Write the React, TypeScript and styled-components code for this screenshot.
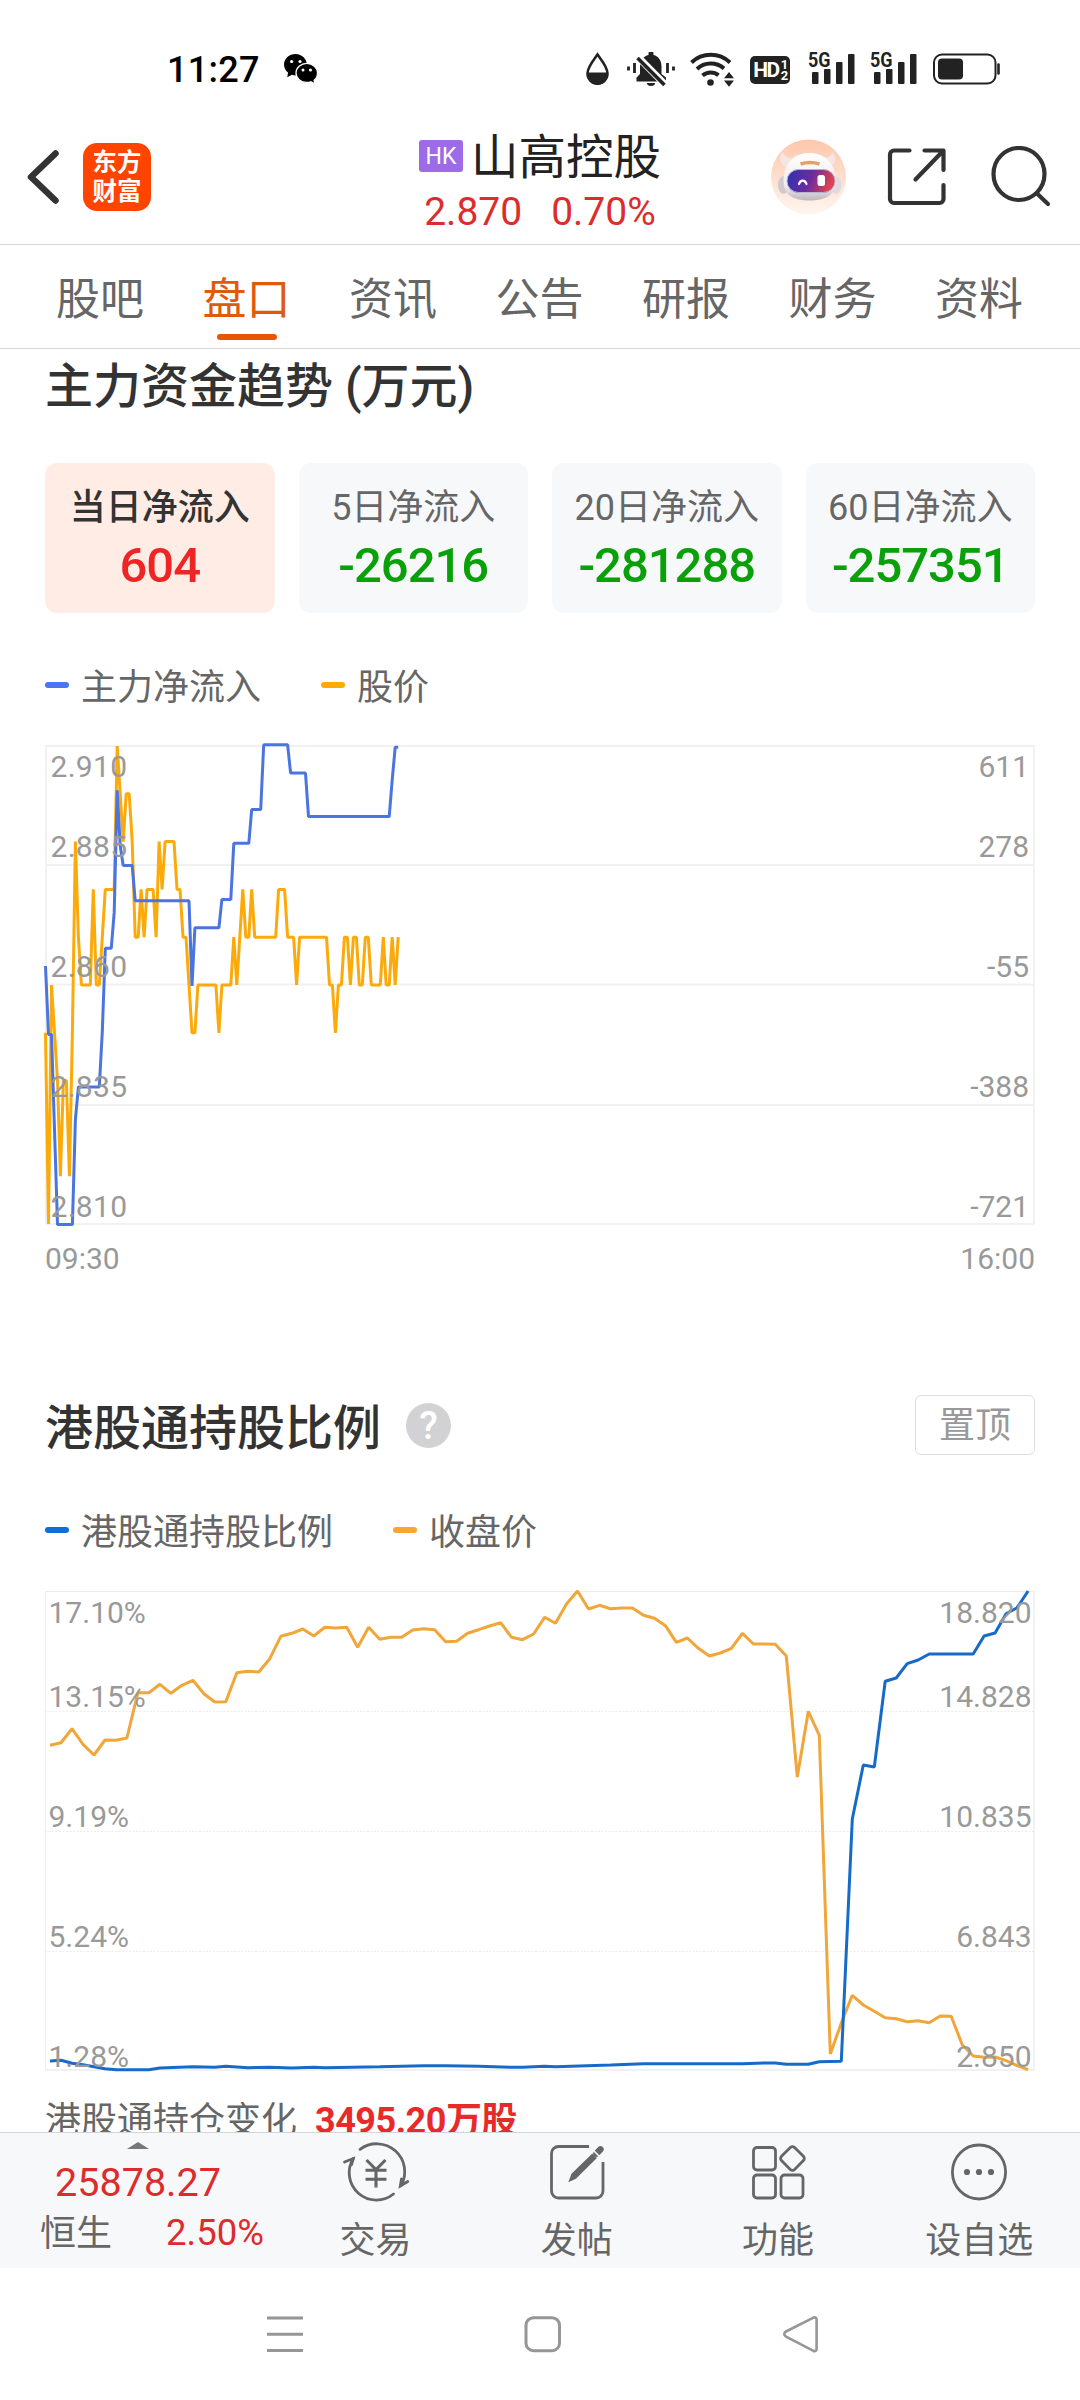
import React from 'react';
import styled, { createGlobalStyle } from 'styled-components';

const GlobalStyle = createGlobalStyle`
  *, *::before, *::after { box-sizing: border-box; }
  body {
    margin: 0;
    background: #ffffff;
    font-family: Roboto, "Noto Sans CJK SC", sans-serif;
    color: #333333;
  }
`;

const Screen = styled.div`
  width: 1080px;
  height: 2400px;
  display: flex;
  flex-direction: column;
  overflow: hidden;
  background: #ffffff;
`;

/* ---------- status bar ---------- */

const StatusBar = styled.div`
  height: 110px;
  flex: none;
  display: flex;
  justify-content: space-between;
  padding: 49px 79px 0 167px;
`;

const StatusGroup = styled.div<{ $gap: number }>`
  display: flex;
  align-items: center;
  gap: ${(p) => p.$gap}px;
  height: 40px;
`;

const Clock = styled.span`
  font-size: 36px;
  font-weight: 500;
  line-height: 40px;
  letter-spacing: 0.3px;
  padding-top: 1px;
  color: #000000;
`;

/* ---------- header ---------- */

const Header = styled.header`
  height: 135px;
  flex: none;
  display: grid;
  grid-template-columns: 1fr auto 1fr;
  border-bottom: 1px solid #d6d6d6;
`;

const HeaderLeft = styled.div`
  display: flex;
  align-items: center;
  gap: 23px;
  padding-left: 25px;
`;

const Logo = styled.div`
  width: 68px;
  height: 68px;
  border-radius: 14px;
  background: #ff4400;
  color: #ffffff;
  display: flex;
  flex-direction: column;
  align-items: center;
  justify-content: center;
  font-size: 24.5px;
  font-weight: 700;
  line-height: 29px;
`;

const StockInfo = styled.div`
  display: flex;
  flex-direction: column;
  align-items: center;
  padding-top: 21px;
  width: 242px;
`;

const StockName = styled.div`
  display: flex;
  align-items: center;
  gap: 8px;
  height: 50px;
  font-size: 47.5px;
  line-height: 50px;
  white-space: nowrap;
  color: #222222;
`;

const StockTitle = styled.span`
  padding-top: 4px;
`;

const MarketTag = styled.span`
  width: 44px;
  height: 32px;
  border-radius: 3px;
  background: #9d6ae8;
  color: #ffffff;
  font-size: 23px;
  line-height: 33px;
  text-align: center;
`;

const Quote = styled.div`
  display: flex;
  gap: 29px;
  margin-top: 6px;
  font-size: 39px;
  line-height: 50px;
  white-space: nowrap;
  color: #dc2c2c;
`;

const HeaderRight = styled.div`
  display: flex;
  align-items: center;
  justify-content: flex-end;
  gap: 43px;
  padding-right: 28px;
`;

/* ---------- tabs ---------- */

const Tabs = styled.nav`
  height: 104px;
  flex: none;
  display: flex;
  justify-content: space-between;
  padding: 0 57px 0 56px;
  border-bottom: 1px solid #d6d6d6;
`;

const Tab = styled.div<{ $active?: boolean }>`
  display: flex;
  flex-direction: column;
  align-items: center;
  padding-top: 26px;
  font-size: 44px;
  line-height: 58px;
  color: ${(p) => (p.$active ? '#e05a0c' : '#666666')};
  &::after {
    content: '';
    width: 60px;
    height: 6px;
    margin-top: 5px;
    border-radius: 3px;
    background: ${(p) => (p.$active ? '#ea5504' : 'transparent')};
  }
`;

/* ---------- page content ---------- */

const Content = styled.main`
  height: 1783px;
  flex: none;
  overflow: hidden;
  padding: 0 45px;
`;

const TitleRow = styled.div<{ $top: number }>`
  display: flex;
  align-items: center;
  height: 60px;
  margin-top: ${(p) => p.$top}px;
`;

const Title = styled.h2<{ $drop: number }>`
  margin: 0;
  padding-top: ${(p) => p.$drop}px;
  font-size: 48px;
  font-weight: 500;
  line-height: 60px;
  white-space: pre;
  color: #333333;
`;

const HelpBadge = styled.span`
  width: 45px;
  height: 45px;
  margin-left: 25px;
  border-radius: 50%;
  background: #d2d2d4;
  color: #ffffff;
  font-size: 38px;
  font-weight: 500;
  line-height: 46px;
  text-align: center;
`;

const PinButton = styled.button`
  width: 120px;
  height: 60px;
  margin-left: auto;
  padding: 2px 0 0;
  border: 1px solid #dedede;
  border-radius: 6px;
  background: #ffffff;
  color: #999999;
  font-family: inherit;
  font-size: 36px;
  line-height: 56px;
`;

const Cards = styled.div`
  display: grid;
  grid-template-columns: repeat(4, 1fr);
  gap: 24px;
  margin-top: 49px;
`;

const Card = styled.div<{ $active?: boolean }>`
  height: 150px;
  border-radius: 12px;
  background: ${(p) => (p.$active ? '#ffede5' : '#f7f8fa')};
  display: flex;
  flex-direction: column;
  align-items: center;
  padding-top: 24px;
`;

const CardLabel = styled.div<{ $active?: boolean }>`
  font-size: 36px;
  line-height: 42px;
  font-weight: ${(p) => (p.$active ? 500 : 400)};
  color: ${(p) => (p.$active ? '#333333' : '#666666')};
`;

const CardValue = styled.div<{ $up?: boolean }>`
  margin-top: 8px;
  font-size: 49px;
  line-height: 58px;
  font-weight: 500;
  letter-spacing: -1px;
  color: ${(p) => (p.$up ? '#ee2525' : '#09a009')};
`;

const Legend = styled.div<{ $top: number }>`
  display: flex;
  gap: 60px;
  height: 48px;
  margin-top: ${(p) => p.$top}px;
`;

const LegendItem = styled.div<{ $color: string }>`
  display: flex;
  align-items: center;
  gap: 12px;
  height: 48px;
  padding-top: 6px;
  font-size: 36px;
  line-height: 48px;
  color: #666666;
  &::before {
    content: '';
    width: 24px;
    height: 6px;
    margin-top: -6px;
    border-radius: 3px;
    background: ${(p) => p.$color};
  }
`;

const Chart = styled.svg<{ $top: number }>`
  display: block;
  width: 990px;
  margin-top: ${(p) => p.$top}px;
  overflow: visible;
  text {
    font-family: Roboto, sans-serif;
    font-size: 30px;
    fill: #999999;
  }
`;

const TimeAxis = styled.div`
  display: flex;
  justify-content: space-between;
  margin-top: 14px;
  font-size: 30px;
  line-height: 40px;
  color: #999999;
`;

const HoldingChange = styled.div`
  display: flex;
  gap: 18px;
  margin-top: 25px;
  font-size: 36px;
  line-height: 50px;
  color: #666666;
`;

const HoldingValue = styled.strong`
  font-weight: 700;
  letter-spacing: -0.5px;
  color: #e82a2a;
`;

/* ---------- bottom bar ---------- */

const BottomBar = styled.footer`
  height: 136px;
  flex: none;
  display: flex;
  border-top: 1px solid #d3d5da;
  background: #f7f8fa;
`;

const IndexPanel = styled.div`
  width: 275px;
  padding: 9px 0 0 40px;
`;

const IndexValue = styled.div`
  display: flex;
  flex-direction: column;
  align-items: center;
  width: 196px;
  font-size: 39.5px;
  line-height: 50px;
  color: #dc2c2c;
`;

const IndexArrow = styled.i`
  display: block;
  border: 11px solid transparent;
  border-top: 0;
  border-bottom: 7px solid #777777;
  margin: 0 0 9px;
`;

const IndexRow = styled.div`
  display: flex;
  align-items: center;
  gap: 54px;
  height: 48px;
  padding-top: 4px;
  font-size: 36px;
  line-height: 48px;
  color: #666666;
`;

const IndexChange = styled.span`
  margin-top: -3px;
  font-size: 36.5px;
  color: #dc2c2c;
`;

const Action = styled.div`
  flex: 1;
  display: flex;
  flex-direction: column;
  align-items: center;
  padding-top: 9px;
  font-size: 36px;
  line-height: 48px;
  color: #666666;
  svg { display: block; margin-bottom: 15px; overflow: visible; }
`;

const NavBar = styled.div`
  flex: 1;
  display: flex;
  justify-content: space-between;
  padding: 46px 260px 0 265px;
`;

/* ---------- status icons ---------- */

const WechatIcon = () => (
  <svg width="34" height="30" viewBox="0 0 34 30">
    <path d="M11.6 0C5.2 0 0 4.700 0 10.500c0 3.300 1.500 6.100 4 8.100l-.7 4.600 4.700-2.400c1.300.4 2.600.6 4 .6 5.800 0 10.900-4.600 10.900-10.400S18 0 11.600 0z" fill="#000" />
    <path d="M22.800 9.400c-6 0-10.800 4.200-10.800 9.500s4.800 9.500 10.800 9.500c1.400 0 2.700-.2 3.900-.6l4.300 2-.9-3.500c2.200-1.800 3.400-4.400 3.400-7.400 0-5.300-4.700-9.500-10.700-9.500z" fill="#000" stroke="#fff" strokeWidth="1.300" />
    <g fill="#fff"><circle cx="7.600" cy="7.500" r="1.600" /><circle cx="16" cy="7.500" r="1.600" /><circle cx="19" cy="16" r="1.500" /><circle cx="26.500" cy="16" r="1.500" /></g>
  </svg>
);

const DropIcon = () => (
  <svg width="27" height="34" viewBox="0 0 27 34">
    <path d="M12.500 2.500C9.500 7 2.500 14.500 2.500 21.500a10 10 0 0 0 20 0C22.500 14.500 15.500 7 12.500 2.500z" fill="none" stroke="#222" strokeWidth="2.600" />
    <path d="M2 20.500h21c.5 7-4 12.500-10.500 12.500S1.500 27.500 2 20.500z" fill="#222" />
  </svg>
);

const MuteIcon = () => (
  <svg width="48" height="34" viewBox="0 0 48 34">
    <path d="M9.500 29.500v-4l3.500-3.500v-7.500C13 8.500 16.500 4 21.500 3V1.500a2.500 2.500 0 0 1 5 0V3c5 1 8 5.500 8 11.500v7.500l4.500 3.500v4z" fill="#222" />
    <path d="M20 31h8a4 3 0 0 1-8 0z" fill="#222" />
    <path d="M9 3 39.500 34" stroke="#fff" strokeWidth="7" />
    <path d="M10.500 6 37.500 33" stroke="#222" strokeWidth="3.600" />
    <path d="M1.500 14.500v4M46.500 14.500v4M7.500 11v10M40.500 11v10" stroke="#222" strokeWidth="2.800" />
  </svg>
);

const WifiIcon = () => (
  <svg width="45" height="36" viewBox="0 0 45 36">
    <g fill="none" stroke="#222" strokeWidth="4">
      <path d="M1.500 11.500a28 28 0 0 1 38.500 0" />
      <path d="M7 18a20 20 0 0 1 27-.5" />
      <path d="M12.500 24.500a12.500 12.500 0 0 1 16-.2" />
    </g>
    <circle cx="20.500" cy="31.500" r="3.300" fill="#222" />
    <path d="M34 27.200l5-6.200 5 6.200zM34 29.600l5 6.200 5-6.200z" fill="#222" />
  </svg>
);

const HdBadge = styled.span`
  display: flex;
  align-items: center;
  justify-content: center;
  width: 40px;
  height: 28px;
  margin: 2px 4px 0 0;
  border-radius: 5px;
  background: #222222;
  color: #ffffff;
  font: 700 21px/28px Roboto, sans-serif;
  letter-spacing: -1.5px;
`;

const HdSims = styled.span`
  display: flex;
  flex-direction: column;
  margin-left: 2px;
  font-size: 13px;
  line-height: 11.5px;
`;

const SignalIcon = () => (
  <svg width="47" height="44" viewBox="0 -5 47 44" overflow="visible">
    <g fill="#222">
      <rect x="3" y="20" width="6.500" height="12" rx="1" />
      <rect x="15" y="17" width="6.500" height="15" rx="1" />
      <rect x="27" y="10" width="6.500" height="22" rx="1" />
      <rect x="39" y="2" width="6.500" height="30" rx="1" />
      <text x="-1" y="14.500" fontFamily="Roboto, sans-serif" fontSize="19.500" fontWeight="700" textLength="22.500" lengthAdjust="spacingAndGlyphs" stroke="#fff" strokeWidth="2" paintOrder="stroke">5G</text>
    </g>
  </svg>
);

const BatteryIcon = () => (
  <svg width="68" height="32" viewBox="0 0 68 32">
    <rect x="1" y="1.500" width="61.500" height="29" rx="8" fill="none" stroke="#222" strokeWidth="2" />
    <rect x="5" y="5.500" width="25" height="21" rx="4" fill="#222" />
    <path d="M65.500 11.500v9" stroke="#222" strokeWidth="2.600" strokeLinecap="round" />
  </svg>
);

/* ---------- header icons ---------- */

const BackIcon = () => (
  <svg width="35" height="60" viewBox="0 0 35 60">
    <path d="M30.500 6.500 6 30l24.500 23.500" fill="none" stroke="#333" strokeWidth="6.500" strokeLinecap="round" strokeLinejoin="round" />
  </svg>
);

const RobotIcon = () => (
  <svg width="73" height="76" viewBox="0 0 73 76" overflow="visible">
    <defs>
      <linearGradient id="halo" x1="0" y1="0" x2="0" y2="1">
        <stop offset="0" stopColor="#ffc7ab" /><stop offset="1" stopColor="#fff6f1" />
      </linearGradient>
      <linearGradient id="visor" x1="0" y1="0" x2="1" y2="0.200">
        <stop offset="0" stopColor="#2b32b4" /><stop offset="0.550" stopColor="#6c2ba0" /><stop offset="1" stopColor="#e0434f" />
      </linearGradient>
      <linearGradient id="helmet" x1="0" y1="0" x2="0" y2="1">
        <stop offset="0" stopColor="#ffffff" /><stop offset="0.700" stopColor="#eeebed" /><stop offset="1" stopColor="#bcb7bd" />
      </linearGradient>
    </defs>
    <circle cx="37.500" cy="38" r="37.500" fill="url(#halo)" />
    <path d="M12 13c-5 6-3 13 4 16l9-10c-7 1-12-1-13-6zM61 13c5 5 4 12-3 16l-9-10c6 1 11-1 12-6z" fill="#f3e6e3" />
    <ellipse cx="12.500" cy="46" rx="5.500" ry="9" fill="#cfcacd" />
    <ellipse cx="65" cy="46" rx="5.500" ry="9" fill="#e0dadd" />
    <path d="M12.500 42c0-17 10-28 25.500-28s26.500 10 26.500 28c0 13-8 19.500-26.500 19.500-17 0-25.500-6.500-25.500-19.500z" fill="url(#helmet)" />
    <path d="M29.500 25c6-1.800 13-1.800 19 0" stroke="#e6a067" strokeWidth="3.500" fill="none" />
    <rect x="16" y="30.500" width="48" height="23" rx="11.500" fill="url(#visor)" stroke="#b9b2d4" strokeWidth="1" />
    <path d="M28 45c1.500-4.500 6-4.500 7.500 0" stroke="#fff" strokeWidth="2.200" fill="none" strokeLinecap="round" />
    <rect x="46.500" y="36" width="7.500" height="11" rx="2.500" fill="#fff" />
  </svg>
);

const ShareIcon = () => (
  <svg width="60" height="60" viewBox="0 0 60 60" fill="none" stroke="#333" strokeWidth="4.200" strokeLinecap="round" strokeLinejoin="round">
    <path d="M22.500 3.500H7a4 4 0 0 0-4 4V52a4 4 0 0 0 4 4h45.500a4 4 0 0 0 4-4V38" />
    <path d="M37.500 3.500h19V23M56 4 28.500 32.500" />
  </svg>
);

const SearchIcon = () => (
  <svg width="62" height="62" viewBox="0 0 62 62" fill="none" stroke="#333" strokeWidth="4.200" strokeLinecap="round">
    <ellipse cx="29" cy="28" rx="25.500" ry="26" />
    <path d="M47 47.500 58 58" />
  </svg>
);

/* ---------- bottom icons ---------- */

const iconProps = { width: 66, height: 60, viewBox: '0 0 66 60', fill: 'none', stroke: '#666666', strokeWidth: 2.8 };

const TradeIcon = () => (
  <svg {...iconProps} strokeLinecap="round">
    <path d="M17 7.300A28 28 0 0 1 58 43.700" />
    <path d="M10.300 16.500A27.200 27.200 0 0 0 50.500 52" />
    <path d="M1.500 20 10.300 16.500 8.600 22.500M58.500 37 57.300 44 64.800 39.500" />
    <path d="M23.500 18 33 27.500l9.500-9.500M22.500 28.300h21M22.500 37.300h21M33 28v17.500" strokeWidth="3.100" strokeLinecap="butt" />
  </svg>
);

const PostIcon = () => (
  <svg {...iconProps}>
    <path d="M45 4.500H14.500a7 7 0 0 0-7 7V49a7 7 0 0 0 7 7H52a7 7 0 0 0 7-7V20" />
    <path d="M24.300 40.300l3.200-8.500L48.300 11.400l4.600 4.600-21 20.700z" fill="#666666" stroke="none" />
    <path d="m52.500 11.500 4-4.200" strokeWidth="6.400" strokeLinecap="round" />
    <path d="m49.500 8.500 7 7" stroke="#f7f8fa" strokeWidth="1.600" />
  </svg>
);

const FeaturesIcon = () => (
  <svg {...iconProps}>
    <rect x="8.500" y="5.500" width="22" height="22.500" rx="3.500" />
    <rect x="8.500" y="33" width="22" height="23" rx="3.500" />
    <rect x="36" y="33" width="22" height="23" rx="3.500" />
    <rect x="38.200" y="7.200" width="18.500" height="18.500" rx="3" transform="rotate(45 47.450 16.450)" />
  </svg>
);

const MoreIcon = () => (
  <svg {...iconProps}>
    <ellipse cx="33" cy="30" rx="26.600" ry="27" />
    <g fill="#666666" stroke="none"><circle cx="21" cy="30" r="3.100" /><circle cx="33" cy="30" r="3.100" /><circle cx="45" cy="30" r="3.100" /></g>
  </svg>
);

/* ---------- chart data ---------- */

// Price per minute since the open, in HK cents.
const intradayPrice = [
  285, 281, 286, 285, 284, 282, 284, 284, 282, 285, 289, 287, 286, 286, 286, 286, 288, 286, 286, 287,
  288, 288, 288, 288, 291, 290, 289, 290, 290, 289, 287, 287, 288, 287, 288, 288, 288, 287, 289, 288,
  289, 289, 289, 289, 288, 288, 287, 287, 286, 285, 285, 286, 286, 286, 286, 286, 286, 286, 285, 286,
  286, 286, 286, 287, 286, 287, 288, 287, 287, 288, 287, 287, 287, 287, 287, 287, 287, 287, 288, 288,
  288, 287, 287, 287, 286, 287, 287, 287, 287, 287, 287, 287, 287, 287, 287, 286, 286, 285, 286, 286,
  287, 287, 286, 287, 287, 286, 286, 287, 287, 286, 286, 286, 286, 287, 286, 286, 287, 286, 287,
];

// [minute, vertical offset in the plot] where the main inflow changes.
const inflow: [number, number][] = [
  [0, 220], [1, 288.500], [2, 288.500], [4, 478.600], [9, 478.600], [10, 373.300], [11, 341], [18, 341],
  [19, 285.600], [20, 202.200], [22, 202.200], [23, 166.400], [24, 44.300], [25, 99.700], [26, 119.400],
  [29, 119.400], [30, 154.800], [48, 154.800], [49, 240], [50, 181.800], [58, 181.800], [59, 153.400],
  [62, 153.400], [63, 97.300], [68, 97.300], [69, 63.600], [72, 63.600], [73, -1.300], [81, -1.300],
  [82, 27.100], [87, 27.100], [88, 70.600], [115, 70.600], [116, 34], [117, 1.200], [118, 1.200],
];

// Closing price per trading day, in thirds of a pixel below the plot top.
const closing = [
  463, 455, 413, 460, 492, 447, 448, 441, 305, 305, 280, 307, 283, 268, 308, 333, 332, 245, 241, 243,
  203, 136, 127, 114, 135, 109, 111, 109, 169, 109, 145, 139, 139, 117, 113, 116, 152, 151, 127, 116,
  105, 95, 139, 146, 129, 79, 97, 39, 0, 54, 43, 53, 51, 51, 73, 82, 104, 154, 141, 172,
  195, 186, 172, 127, 159, 159, 160, 195, 558, 361, 433, 1389, 1296, 1213, 1242, 1261, 1280, 1283, 1292, 1289,
  1295, 1275, 1276, 1361, 1395, 1399, 1398, 1409, 1424, 1436,
];

// [day, offset] of the holding ratio, same unit as the closing price.
const holding: [number, number][] = [
  [0, 1410], [1, 1408], [2, 1417], [3, 1421], [4, 1427], [5, 1433], [6, 1436], [9, 1436], [10, 1431],
  [13, 1427], [15, 1429], [16, 1426], [18, 1430], [20, 1429], [22, 1431], [24, 1429], [25, 1430],
  [30, 1427], [34, 1424], [36, 1424], [39, 1426], [42, 1429], [43, 1429], [45, 1426], [46, 1427],
  [51, 1422], [54, 1418], [63, 1418], [65, 1416], [66, 1416], [67, 1420], [69, 1420], [70, 1412],
  [72, 1411], [73, 684], [74, 522], [75, 528], [76, 271], [77, 261], [78, 218], [79, 207], [80, 189],
  [84, 189], [85, 135], [86, 126], [87, 68], [88, 50], [89, 0],
];

const line = (points: [number, number][]) =>
  points.map(([x, y]) => `${x.toFixed(1)},${y.toFixed(1)}`).join(' ');

const minuteX = (m: number) => 0.5 + m * 2.989;
const dayX = (d: number) => 5 + d * 10.99;

const FundFlowChart = () => (
  <Chart $top={36} height={480} viewBox="0 0 990 480">
    <g stroke="#f1f1f1" strokeWidth="2" fill="none">
      <path d="M1 0v480M989 0v480M0 1h990M0 120h990M0 239.500h990M0 360h990M0 479h990" />
    </g>
    <g fill="none" strokeWidth="3" strokeLinejoin="bevel">
      <polyline stroke="#fca90a" points={line(intradayPrice.map((v, i) => [minuteX(i), 1 + (291 - v) * 47.8]))} />
      <polyline stroke="#4a74e0" points={line(inflow.map(([m, y]) => [minuteX(m), y + 1]))} />
    </g>
    {['2.910', '2.885', '2.860', '2.835', '2.810'].map((t, i) => (
      <text key={t} x="5.500" y={[31.6, 111.6, 231.6, 351.6, 471.6][i]} letterSpacing="0.300">{t}</text>
    ))}
    {['611', '278', '-55', '-388', '-721'].map((t, i) => (
      <text key={t} x="984" y={[31.6, 111.6, 231.6, 351.6, 471.6][i]} textAnchor="end">{t}</text>
    ))}
  </Chart>
);

const HoldingChart = () => (
  <Chart $top={37} height={480} viewBox="0 0 990 480">
    <path d="M0.500 480V0.500H990" stroke="#ececec" fill="none" />
    <path d="M989 0v479H0" stroke="#f1f1f1" strokeWidth="2" fill="none" />
    <path d="M0 120.500h990M0 240.500h990M0 360.500h990" stroke="#ececec" strokeDasharray="2 1.500" fill="none" />
    <g fill="none" strokeWidth="3" strokeLinejoin="bevel">
      <polyline stroke="#f0a638" points={line(closing.map((v, i) => [dayX(i), v / 3]))} />
      <polyline stroke="#166bc8" points={line(holding.map(([d, v]) => [dayX(d), v / 3]))} />
    </g>
    {['17.10%', '13.15%', '9.19%', '5.24%', '1.28%'].map((t, i) => (
      <text key={t} x="3.500" y={[32, 116, 236, 356, 476][i]}>{t}</text>
    ))}
    {['18.820', '14.828', '10.835', '6.843', '2.850'].map((t, i) => (
      <text key={t} x="986.500" y={[32, 116, 236, 356, 476][i]} textAnchor="end">{t}</text>
    ))}
  </Chart>
);

const tabs = ['股吧', '盘口', '资讯', '公告', '研报', '财务', '资料'];

const periods = [
  { label: '当日净流入', value: '604' },
  { label: '5日净流入', value: '-26216' },
  { label: '20日净流入', value: '-281288' },
  { label: '60日净流入', value: '-257351' },
];

export default function App() {
  return (
    <Screen>
      <GlobalStyle />
      <StatusBar>
        <StatusGroup $gap={24}>
          <Clock>11:27</Clock>
          <WechatIcon />
        </StatusGroup>
        <StatusGroup $gap={15}>
          <DropIcon />
          <MuteIcon />
          <WifiIcon />
          <HdBadge>HD<HdSims><span>1</span><span>2</span></HdSims></HdBadge>
          <SignalIcon />
          <SignalIcon />
          <BatteryIcon />
        </StatusGroup>
      </StatusBar>

      <Header>
        <HeaderLeft>
          <BackIcon />
          <Logo><span>东方</span><span>财富</span></Logo>
        </HeaderLeft>
        <StockInfo>
          <StockName><MarketTag>HK</MarketTag><StockTitle>山高控股</StockTitle></StockName>
          <Quote><span>2.870</span><span>0.70%</span></Quote>
        </StockInfo>
        <HeaderRight>
          <RobotIcon />
          <ShareIcon />
          <SearchIcon />
        </HeaderRight>
      </Header>

      <Tabs>
        {tabs.map((t) => <Tab key={t} $active={t === '盘口'}>{t}</Tab>)}
      </Tabs>

      <Content>
        <TitleRow $top={5}><Title $drop={5}>主力资金趋势 (万元)</Title></TitleRow>
        <Cards>
          {periods.map((p, i) => (
            <Card key={p.label} $active={i === 0}>
              <CardLabel $active={i === 0}>{p.label}</CardLabel>
              <CardValue $up={i === 0}>{p.value}</CardValue>
            </Card>
          ))}
        </Cards>
        <Legend $top={48}>
          <LegendItem $color="#4876f5">主力净流入</LegendItem>
          <LegendItem $color="#ffaa00">股价</LegendItem>
        </Legend>
        <FundFlowChart />
        <TimeAxis><span>09:30</span><span>16:00</span></TimeAxis>

        <TitleRow $top={116}>
          <Title $drop={8}>港股通持股比例</Title>
          <HelpBadge>?</HelpBadge>
          <PinButton>置顶</PinButton>
        </TitleRow>
        <Legend $top={51}>
          <LegendItem $color="#0f6fd9">港股通持股比例</LegendItem>
          <LegendItem $color="#f7a630">收盘价</LegendItem>
        </Legend>
        <HoldingChart />
        <HoldingChange>
          <span>港股通持仓变化</span>
          <HoldingValue>3495.20万股</HoldingValue>
        </HoldingChange>
      </Content>

      <BottomBar>
        <IndexPanel>
          <IndexValue><IndexArrow />25878.27</IndexValue>
          <IndexRow><span>恒生</span><IndexChange>2.50%</IndexChange></IndexRow>
        </IndexPanel>
        <Action><TradeIcon />交易</Action>
        <Action><PostIcon />发帖</Action>
        <Action><FeaturesIcon />功能</Action>
        <Action><MoreIcon />设自选</Action>
      </BottomBar>

      <NavBar>
        <svg width="40" height="40" viewBox="0 0 40 40" stroke="#969696" strokeWidth="3">
          <path d="M2 4h36M2 20.300h36M2 36.600h36" />
        </svg>
        <svg width="40" height="40" viewBox="0 0 40 40" fill="none" stroke="#969696" strokeWidth="3">
          <rect x="3" y="3.700" width="33.500" height="33" rx="7.500" />
        </svg>
        <svg width="40" height="40" viewBox="0 0 40 40" fill="none" stroke="#969696" strokeWidth="2.600">
          <path d="M33 3.800 6 17.500c-2.300 1.200-2.300 4 0 5.200L33 36.700c2.300 1 3.600 0 3.600-2V5.800c0-2-1.300-3-3.600-2z" />
        </svg>
      </NavBar>
    </Screen>
  );
}
